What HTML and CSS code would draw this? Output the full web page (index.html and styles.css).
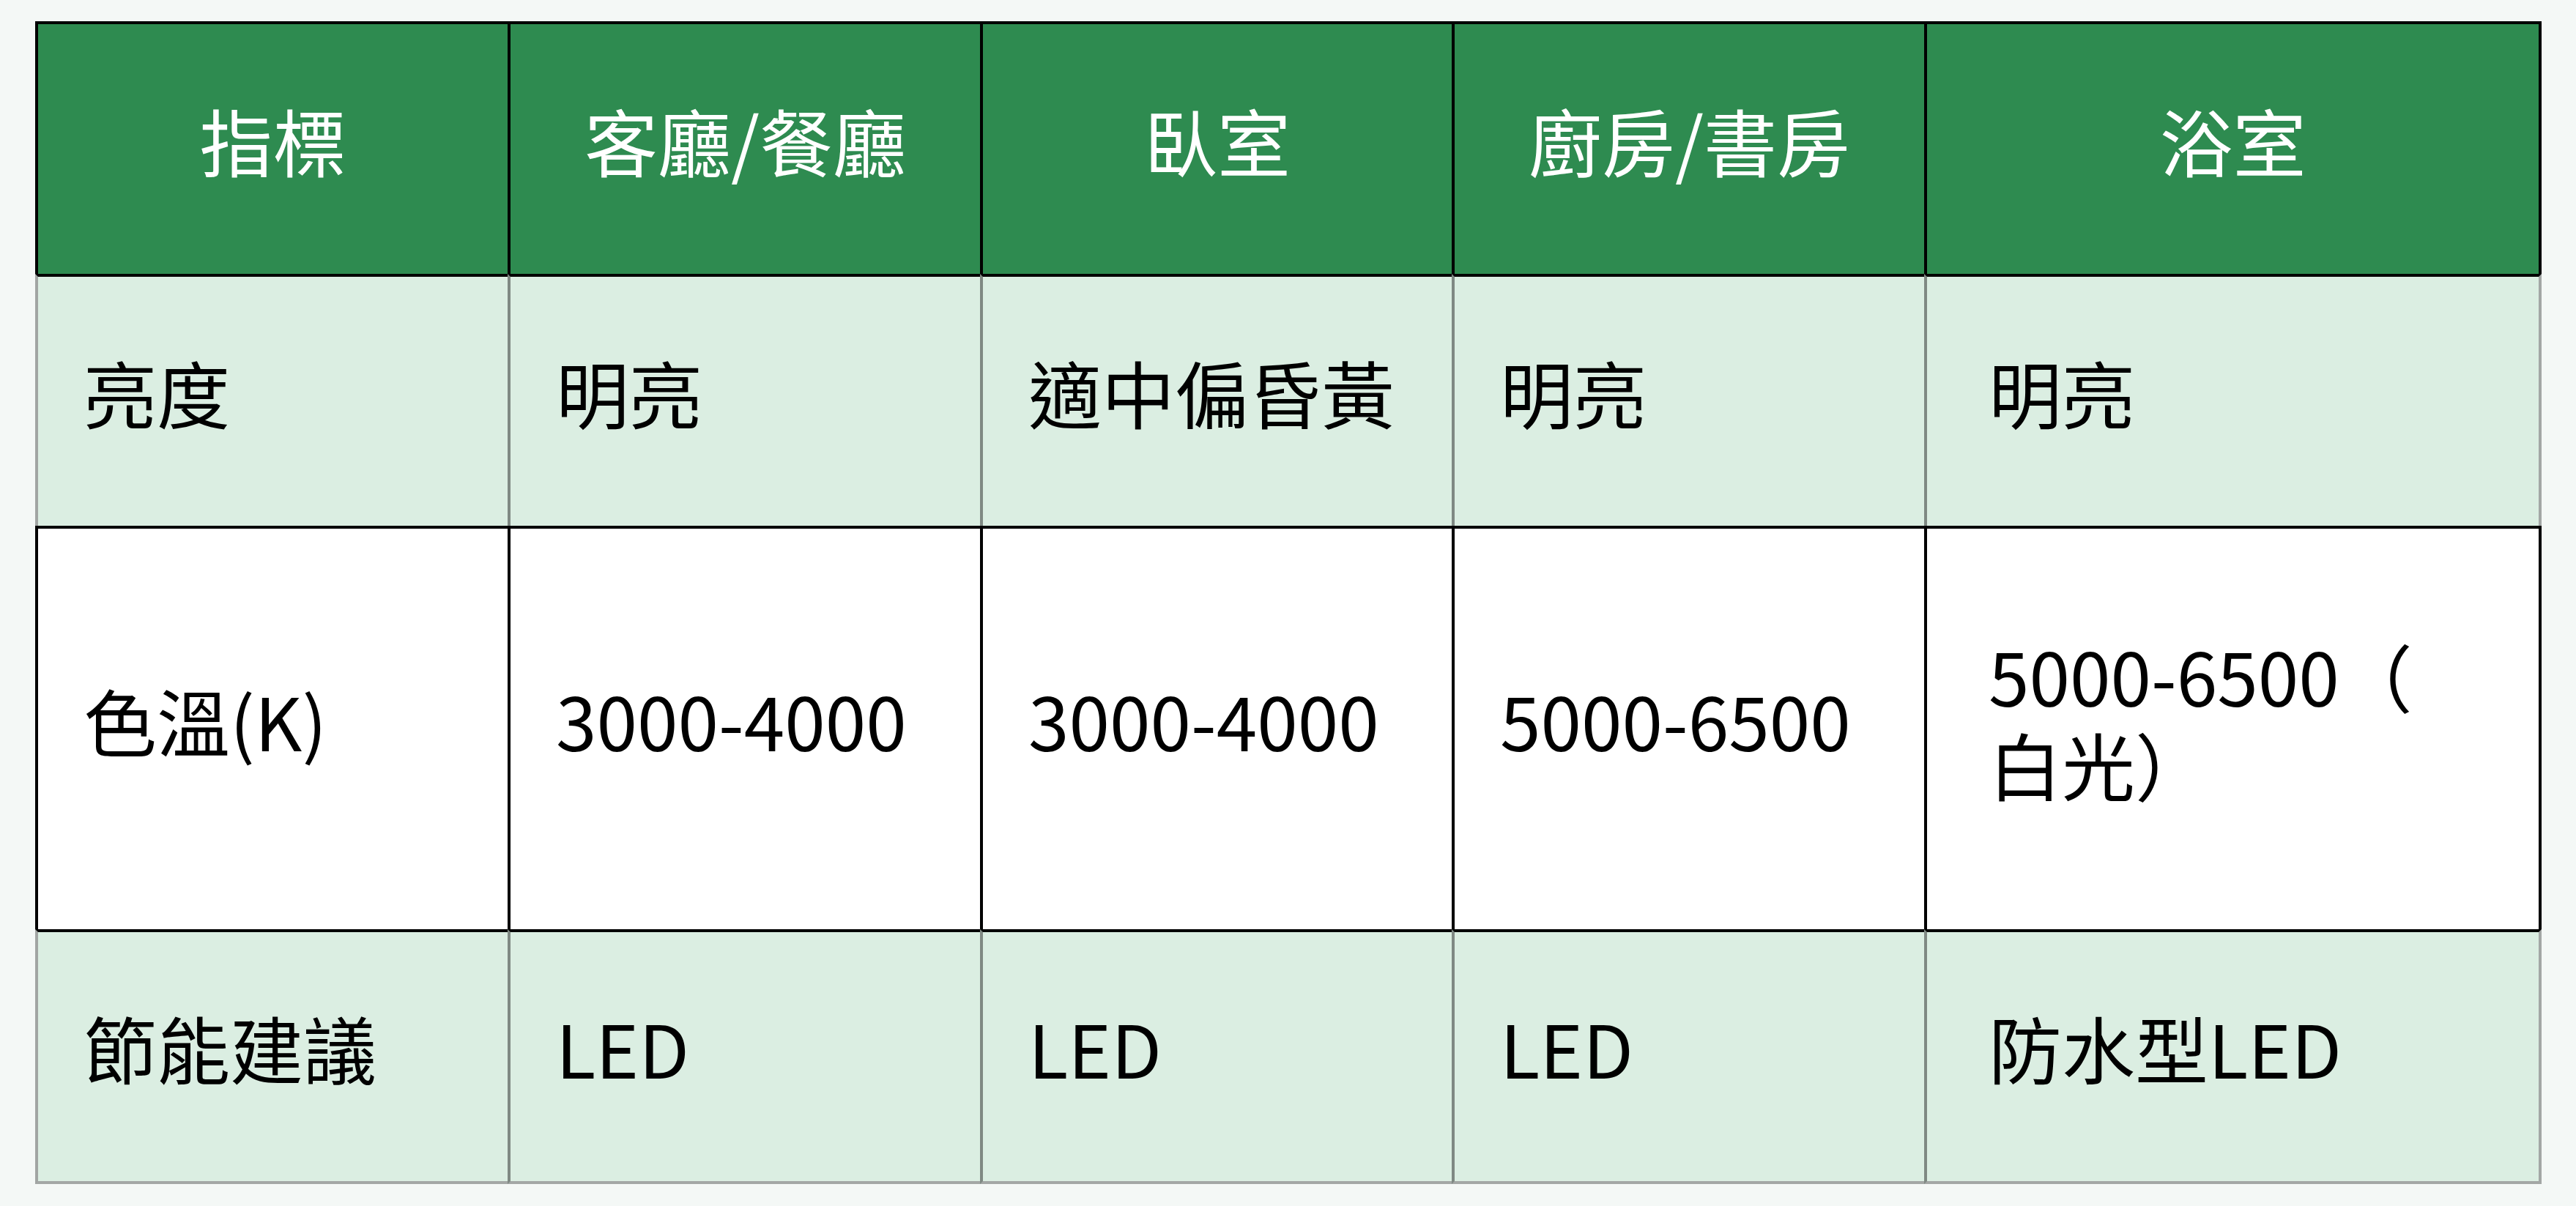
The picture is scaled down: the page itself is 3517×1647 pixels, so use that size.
FILE: index.html
```html
<!DOCTYPE html>
<html lang="zh-Hant">
<head>
<meta charset="utf-8">
<title>照明指標</title>
<link rel="stylesheet" href="styles.css">
</head>
<body>
<div class="page">
  <div class="table" role="table">
    <div class="cell head first-col">指標</div>
    <div class="cell head">客廳/餐廳</div>
    <div class="cell head">臥室</div>
    <div class="cell head">廚房/書房</div>
    <div class="cell head last-col">浴室</div>

    <div class="cell light first-col">亮度</div>
    <div class="cell light">明亮</div>
    <div class="cell light">適中偏昏黃</div>
    <div class="cell light">明亮</div>
    <div class="cell light last-col">明亮</div>

    <div class="cell plain first-col">色溫(K)</div>
    <div class="cell plain">3000-4000</div>
    <div class="cell plain">3000-4000</div>
    <div class="cell plain">5000-6500</div>
    <div class="cell plain last-col">5000-6500（<br>白光）</div>

    <div class="cell light bottom first-col">節能建議</div>
    <div class="cell light bottom">LED</div>
    <div class="cell light bottom">LED</div>
    <div class="cell light bottom">LED</div>
    <div class="cell light bottom last-col">防水型LED</div>
  </div>
</div>
</body>
</html>
```

FILE: styles.css
```css
html, body {
  margin: 0;
  padding: 0;
  background: #f4f8f6;
}

.page {
  width: 3517px;
  height: 1647px;
  box-sizing: border-box;
  padding: 29px 0 0 48px;
  overflow: hidden;
}

.table {
  display: grid;
  grid-template-columns: 645px 645px 644px 645px 843px;
  grid-template-rows: 345px 344px 551px 348px;
  font-family: "Noto Sans CJK TC", "Noto Sans", sans-serif;
  font-size: 100px;
  line-height: 1.21;
  color: #000;
}

.cell {
  box-sizing: border-box;
  display: flex;
  align-items: center;
  padding: 0 16px 27px 62px;
  border-left: 4px solid #000;
  border-top: 4px solid #000;
}

.cell.last-col {
  padding-left: 84px;
  padding-right: 30px;
}

.head {
  background: #2e8b50;
  color: #fff;
  justify-content: center;
  padding-left: 0;
  padding-right: 0;
}

.head.last-col {
  padding-left: 0;
  padding-right: 0;
  border-right: 4px solid #000;
}

.light {
  background: #dbeee2;
  border-left-color: #7f8983;
}

.light.first-col {
  border-left-color: #a1a5a3;
}

.light.last-col {
  border-right: 4px solid #a3a7a5;
}

.light.bottom {
  border-bottom: 4px solid #a3a7a5;
}

.plain {
  background: #fff;
}

.plain.last-col {
  border-right: 4px solid #000;
}
```
